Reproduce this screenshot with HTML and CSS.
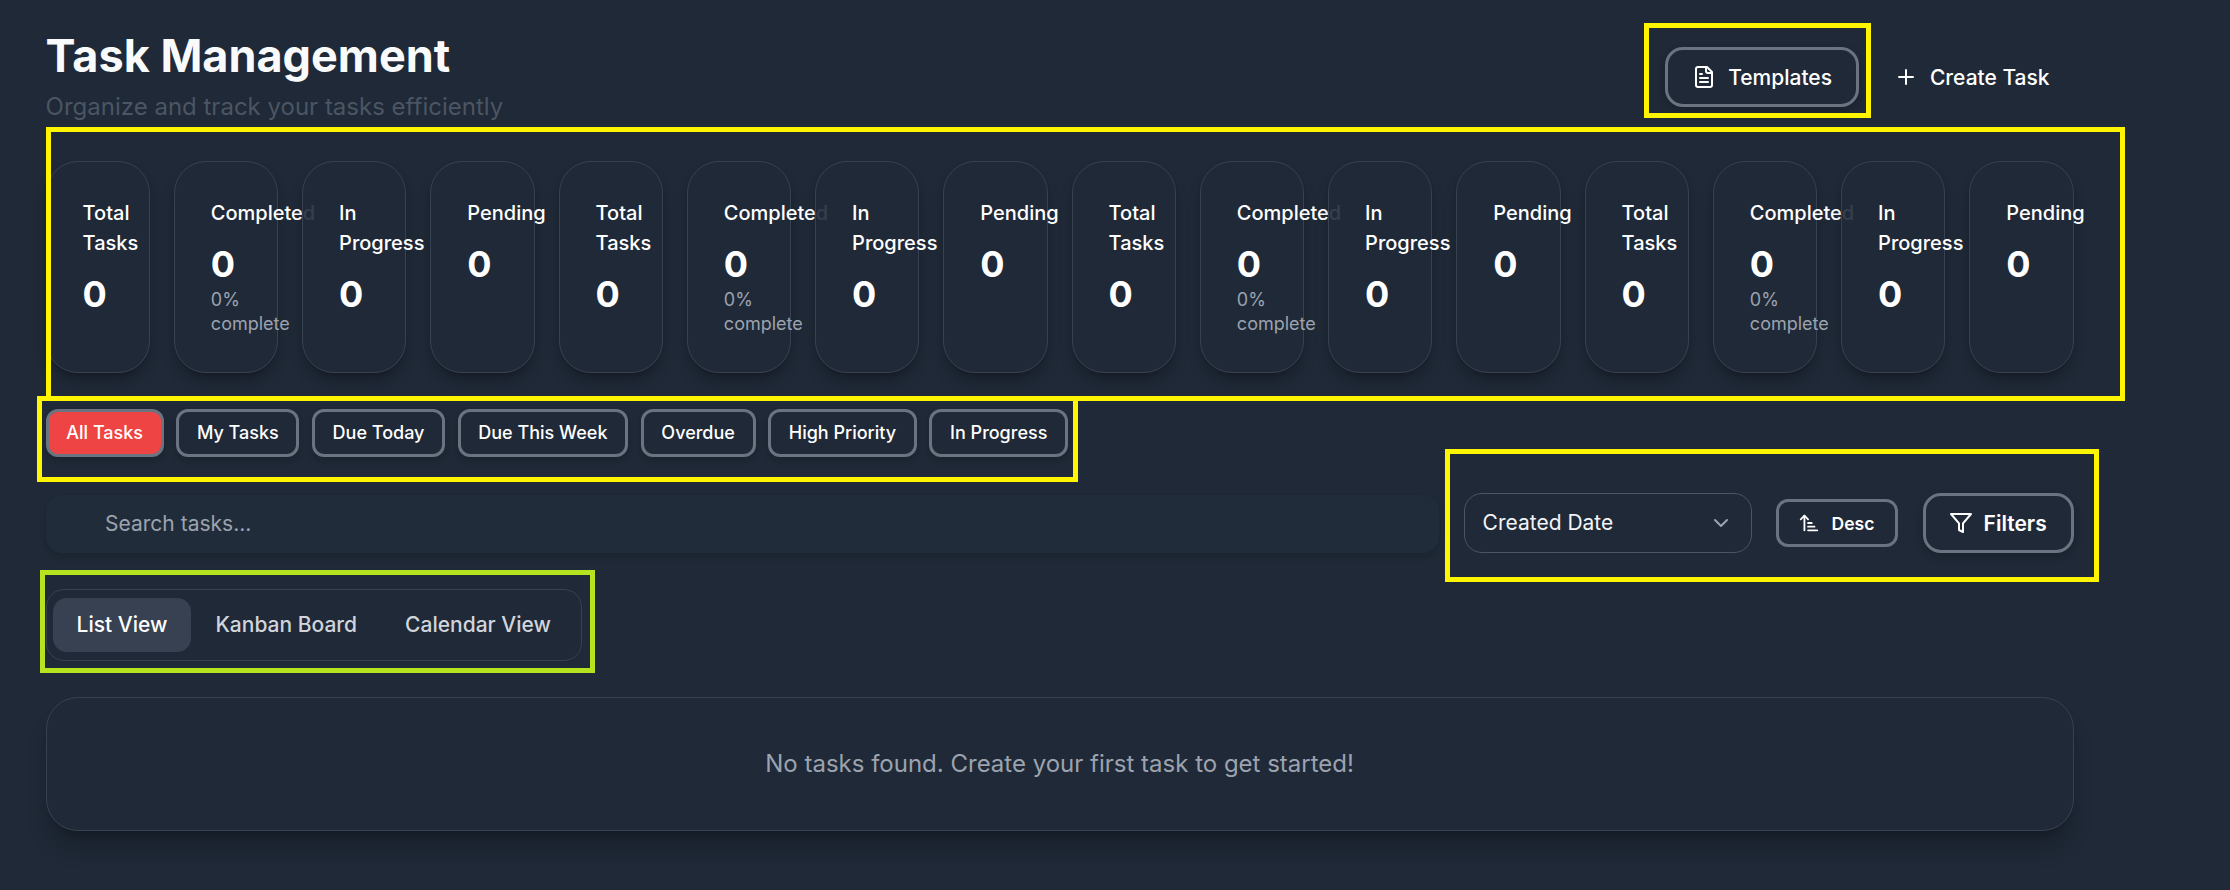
FILE: index.html
```html
<!DOCTYPE html>
<html>
<head>
    <title>Task Management</title>
    <link rel="stylesheet" href="styles.css">
</head>
<body>
    <div class="page">
        <header class="page-header">
            <div class="title-block">
                <h1>Task Management</h1>
                <p class="subtitle">Organize and track your tasks efficiently</p>
            </div>
            <div class="header-actions">
                <button class="btn btn-outline">
                    <svg class="icon" viewBox="0 0 24 24"><path d="M15 2H6a2 2 0 0 0-2 2v16a2 2 0 0 0 2 2h12a2 2 0 0 0 2-2V7Z"/><path d="M14 2v4a2 2 0 0 0 2 2h4"/><path d="M10 9H8"/><path d="M16 13H8"/><path d="M16 17H8"/></svg>
                    Templates
                </button>
                <button class="btn btn-ghost">
                    <svg class="icon" viewBox="0 0 24 24"><path d="M5 12h14"/><path d="M12 5v14"/></svg>
                    Create Task
                </button>
            </div>
        </header>

        <section class="stats">
            <div class="stat-card"><div class="stat-label">Total Tasks</div><div class="stat-value">0</div></div>
            <div class="stat-card"><div class="stat-label">Completed</div><div class="stat-value">0</div><div class="stat-sub">0% complete</div></div>
            <div class="stat-card"><div class="stat-label">In Progress</div><div class="stat-value">0</div></div>
            <div class="stat-card"><div class="stat-label">Pending</div><div class="stat-value">0</div></div>
            <div class="stat-card"><div class="stat-label">Total Tasks</div><div class="stat-value">0</div></div>
            <div class="stat-card"><div class="stat-label">Completed</div><div class="stat-value">0</div><div class="stat-sub">0% complete</div></div>
            <div class="stat-card"><div class="stat-label">In Progress</div><div class="stat-value">0</div></div>
            <div class="stat-card"><div class="stat-label">Pending</div><div class="stat-value">0</div></div>
            <div class="stat-card"><div class="stat-label">Total Tasks</div><div class="stat-value">0</div></div>
            <div class="stat-card"><div class="stat-label">Completed</div><div class="stat-value">0</div><div class="stat-sub">0% complete</div></div>
            <div class="stat-card"><div class="stat-label">In Progress</div><div class="stat-value">0</div></div>
            <div class="stat-card"><div class="stat-label">Pending</div><div class="stat-value">0</div></div>
            <div class="stat-card"><div class="stat-label">Total Tasks</div><div class="stat-value">0</div></div>
            <div class="stat-card"><div class="stat-label">Completed</div><div class="stat-value">0</div><div class="stat-sub">0% complete</div></div>
            <div class="stat-card"><div class="stat-label">In Progress</div><div class="stat-value">0</div></div>
            <div class="stat-card"><div class="stat-label">Pending</div><div class="stat-value">0</div></div>
        </section>

        <div class="chips">
            <button class="chip chip-active">All Tasks</button>
            <button class="chip">My Tasks</button>
            <button class="chip">Due Today</button>
            <button class="chip">Due This Week</button>
            <button class="chip">Overdue</button>
            <button class="chip">High Priority</button>
            <button class="chip">In Progress</button>
        </div>

        <div class="toolbar">
            <div class="search">Search tasks...</div>
            <div class="select">
                <span>Created Date</span>
                <svg class="chevron" viewBox="0 0 24 24"><path d="m6 9 6 6 6-6"/></svg>
            </div>
            <button class="btn-sort">
                <svg class="icon-sm" viewBox="0 0 24 24"><path d="m3 8 4-4 4 4"/><path d="M7 4v16"/><path d="M11 12h4"/><path d="M11 16h7"/><path d="M11 20h10"/></svg>
                Desc
            </button>
            <button class="btn btn-outline btn-filters">
                <svg class="icon" viewBox="0 0 24 24"><polygon points="22 3 2 3 10 12.46 10 19 14 21 14 12.46 22 3"/></svg>
                Filters
            </button>
        </div>

        <div class="tabs">
            <button class="tab tab-active">List View</button>
            <button class="tab">Kanban Board</button>
            <button class="tab">Calendar View</button>
        </div>

        <div class="empty-card">No tasks found. Create your first task to get started!</div>
    </div>

    <!-- annotation boxes drawn over the screenshot -->
    <div class="mark mark-templates"></div>
    <div class="mark mark-stats"></div>
    <div class="mark mark-chips"></div>
    <div class="mark mark-sort"></div>
    <div class="mark mark-tabs"></div>
</body>
</html>
```

FILE: styles.css
```css
* {
    box-sizing: border-box;
}

html, body {
    margin: 0;
    height: 100%;
    overflow: hidden;
}

body {
    position: relative;
    background-color: #1f2937;
    color: #fff;
    font-family: Inter, "Liberation Sans", sans-serif;
}

.page {
    width: 2073.6px;
    padding: 0 0 0 45.6px;
}

button {
    font-family: inherit;
    cursor: pointer;
}

/* header */
.page-header {
    display: flex;
    justify-content: space-between;
    height: 127px;
}

h1 {
    margin: 0;
    padding-top: 28px;
    font-size: 45px;
    line-height: 56px;
    font-weight: 700;
    color: #f9fafb;
}

.subtitle {
    margin: 7px 0 0;
    font-size: 24px;
    line-height: 32px;
    color: #4b5563;
}

.header-actions {
    display: flex;
    align-items: flex-start;
    gap: 8px;
    padding-top: 47px;
}

.btn {
    display: flex;
    align-items: center;
    gap: 12px;
    height: 60px;
    padding: 0 24px;
    border: 3px solid transparent;
    border-radius: 18px;
    background: none;
    color: #fff;
    font-size: 21px;
    font-weight: 500;
}

.btn-ghost {
    padding-right: 21px;
}

.btn-outline {
    border-color: #6b7280;
    box-shadow: 0 4px 8px rgba(0, 0, 0, 0.2);
}

.icon, .icon-sm, .chevron {
    fill: none;
    stroke: currentColor;
    stroke-width: 2;
    stroke-linecap: round;
    stroke-linejoin: round;
    flex-shrink: 0;
}

.icon {
    width: 24px;
    height: 24px;
}

.icon-sm {
    width: 22px;
    height: 22px;
}

/* stat cards */
.stats {
    display: grid;
    grid-template-columns: repeat(16, minmax(0, 1fr));
    gap: 24px;
    margin-top: 34px;
}

.stat-card {
    padding: 36px;
    border: 1px solid #374151;
    border-radius: 32px;
    background-color: rgba(31, 41, 55, 0.9);
    box-shadow: 0 10px 15px -3px rgba(0, 0, 0, 0.25), 0 4px 6px -4px rgba(0, 0, 0, 0.25);
}

.stat-label {
    font-size: 20px;
    line-height: 30px;
    font-weight: 500;
    margin-bottom: 16px;
}

.stat-value {
    font-size: 36px;
    line-height: 40px;
    font-weight: 700;
}

.stat-sub {
    margin-top: 4px;
    font-size: 18px;
    line-height: 24px;
    color: #9ca3af;
}

/* quick filters */
.chips {
    display: flex;
    gap: 12.5px;
    margin-top: 36px;
}

.chip {
    height: 48px;
    padding: 0 17.7px 1px;
    border: 3px solid #6b7280;
    border-radius: 12px;
    background: none;
    color: #fff;
    font-size: 18px;
    font-weight: 500;
    box-shadow: 0 4px 6px rgba(0, 0, 0, 0.15);
}

.chip-active {
    background-color: #ef4444;
}

/* search and sort row */
.toolbar {
    display: flex;
    align-items: center;
    margin-top: 36px;
    height: 60px;
}

.search {
    width: 1393px;
    height: 58px;
    margin-top: 2px;
    padding-left: 59.5px;
    border-radius: 16px;
    background-color: #212c3a;
    color: #9ca3af;
    font-size: 21px;
    line-height: 58px;
    box-shadow: 0 4px 6px rgba(0, 0, 0, 0.12);
}

.select {
    display: flex;
    align-items: center;
    justify-content: space-between;
    width: 288px;
    height: 60px;
    margin-left: 25px;
    padding: 0 18px 1px;
    border: 1px solid #4b5563;
    border-radius: 18px;
    color: #f3f4f6;
    font-size: 21px;
    font-weight: 400;
}

.chevron {
    width: 24px;
    height: 24px;
    color: #9ca3af;
}

.btn-sort {
    display: flex;
    align-items: center;
    gap: 12px;
    width: 122px;
    height: 48px;
    margin-left: 24px;
    padding: 0 19px;
    border: 3px solid #6b7280;
    border-radius: 12px;
    background: none;
    color: #fff;
    font-size: 17.5px;
    font-weight: 600;
}

.btn-filters {
    margin-left: 25px;
    width: 151px;
    padding: 0 23px;
    gap: 11px;
    font-weight: 600;
}

/* view tabs */
.tabs {
    display: inline-flex;
    margin-top: 36px;
    padding: 8px 6px;
    border: 1px solid #374151;
    border-radius: 18px;
}

.tab {
    height: 54px;
    padding: 0 24px 1px;
    border: none;
    border-radius: 14px;
    background: none;
    color: #d1d5db;
    font-size: 21px;
    font-weight: 500;
}

.tab-active {
    background-color: #374151;
    color: #fff;
}

/* empty list */
.empty-card {
    height: 134px;
    margin-top: 36px;
    border: 1px solid #374151;
    border-radius: 32px;
    color: #9ca3af;
    font-size: 24px;
    line-height: 132px;
    text-align: center;
    box-shadow: 0 20px 25px -5px rgba(0, 0, 0, 0.22), 0 8px 10px -6px rgba(0, 0, 0, 0.22);
}

/* annotation boxes */
.mark {
    position: absolute;
    border: 5px solid #fff500;
}

.mark-templates {
    left: 1644px;
    top: 23px;
    width: 227px;
    height: 95px;
}

.mark-stats {
    left: 46px;
    top: 127px;
    width: 2079px;
    height: 274px;
}

.mark-chips {
    left: 37px;
    top: 396px;
    width: 1041px;
    height: 86px;
}

.mark-sort {
    left: 1445px;
    top: 449px;
    width: 654px;
    height: 133px;
}

.mark-tabs {
    left: 40px;
    top: 570px;
    width: 555px;
    height: 103px;
    border-color: #b5e31f;
}
```
